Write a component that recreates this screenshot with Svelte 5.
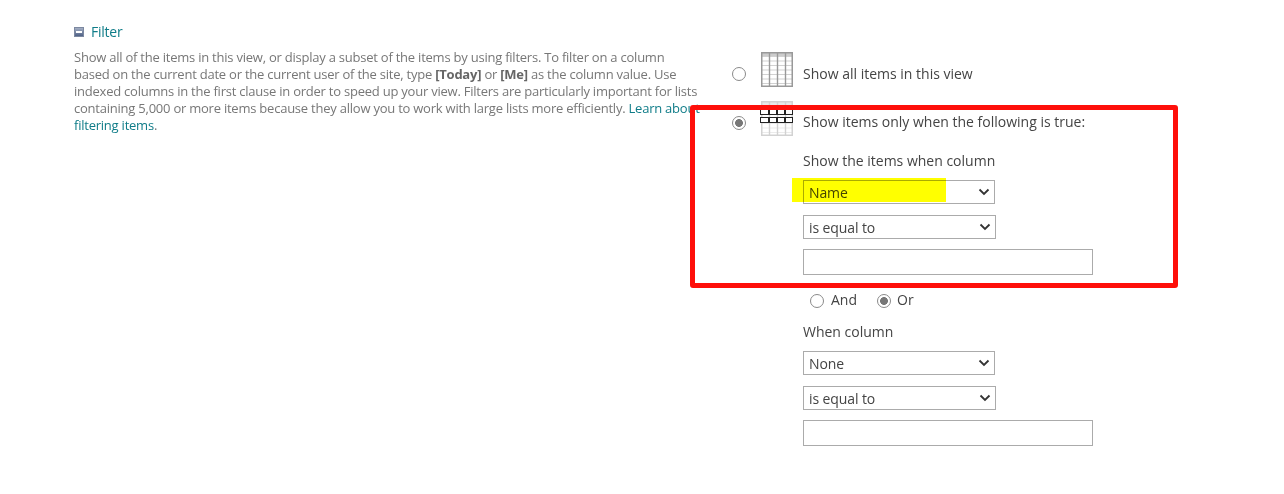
<script>
  const cols = [1, 2, 3];
  const rows = [0, 1, 2, 3, 4, 5, 6];
</script>

{#snippet grid(cls)}
  <svg class={cls} width="32" height="35" viewBox="0 0 32 35" aria-hidden="true">
    <rect x="0.75" y="0.75" width="30.5" height="33.5" fill="#fff" stroke="currentColor" stroke-width="1.5" />
    <rect x="1" y="1" width="30" height="3" fill="currentColor" opacity="0.5" />
    {#each rows as r}
      <line x1="1" x2="31" y1={4.5 + r * 4.5} y2={4.5 + r * 4.5} stroke="currentColor" stroke-opacity="0.45" />
    {/each}
    {#each cols as c}
      <line x1={0.5 + c * 8} x2={0.5 + c * 8} y1="1" y2="34" stroke="currentColor" stroke-width="1.4" />
    {/each}
  </svg>
{/snippet}

{#snippet select(label, cls = '')}
  <div class="select {cls}">
    <span>{label}</span>
    <svg width="12" height="8" viewBox="0 0 12 8" aria-hidden="true"><path d="M1.5 1.5 6 6l4.5-4.5" fill="none" stroke="#333" stroke-width="1.8" /></svg>
  </div>
{/snippet}

<div class="page">
  <section class="left">
    <h2><span class="toggle"><i></i></span>Filter</h2>
    <p>Show all of the items in this view, or display a subset of the items by using filters. To filter on a column based on the current date or the current user of the site, type <b>[Today]</b> or <b>[Me]</b> as the column value. Use indexed columns in the first clause in order to speed up your view. Filters are particularly important for lists containing 5,000 or more items because they allow you to work with large lists more efficiently. <a href="#top">Learn about filtering items</a>.</p>
  </section>

  <section class="right">
    <div class="option">
      <span class="radio"></span>
      {@render grid('grid dark')}
      <span class="label top">Show all items in this view</span>
    </div>
    <div class="option second">
      <span class="radio on"></span>
      <span class="gridwrap">
        {@render grid('grid light')}
        <i class="bar b1"></i><i class="bar b2"></i>
      </span>
      <span class="label">Show items only when the following is true:</span>
    </div>

    <div class="form">
      <div class="caption first">Show the items when column</div>
      {@render select('Name', 'gap1')}
      {@render select('is equal to', 'wide gap2')}
      <div class="input gap3"></div>
      <div class="andor">
        <span class="radio small"></span><span>And</span>
        <span class="radio small on orr"></span><span>Or</span>
      </div>
      <div class="caption when">When column</div>
      {@render select('None', 'gap1')}
      {@render select('is equal to', 'wide gap2')}
      <div class="input gap3"></div>
    </div>
  </section>

  <div class="redbox"></div>
  <div class="marker"></div>
</div>

<style>
  :global(body) { margin: 0; background: #fff; }
  .page {
    position: relative;
    width: 1284px;
    height: 494px;
    overflow: hidden;
    display: flex;
    font-family: "Open Sans", "Noto Sans", sans-serif;
    color: #444;
    background: #fff;
  }
  .left { width: 729px; box-sizing: border-box; padding: 23px 0 0 74px; flex: none; }
  h2 {
    margin: 0;
    display: flex;
    align-items: center;
    font-size: 14px;
    font-weight: 400;
    line-height: 18px;
    letter-spacing: -0.25px;
    color: #0f7c88;
  }
  .toggle {
    width: 8px; height: 8px;
    margin-right: 7px;
    background: linear-gradient(#a4afc4, #4f6186);
    border: 1px solid #7c88a0;
    box-sizing: content-box;
    display: flex; align-items: center; justify-content: center;
  }
  .toggle i { width: 6px; height: 2px; background: #fff; display: block; }
  p {
    margin: 8px 0 0;
    width: 626px;
    font-size: 13px;
    line-height: 17px;
    letter-spacing: -0.23px;
    color: #777;
  }
  p b { color: #666; }
  a { color: #0f7c88; text-decoration: none; }

  .right { flex: none; padding: 52px 0 0 3px; color: #444; font-size: 14px; }
  .option { display: flex; align-items: flex-start; height: 35px; }
  .second { margin-top: 14px; }
  .label { margin-top: 11px; line-height: 20px; }
  .label.top { margin-top: 12px; }
  .radio {
    display: inline-block;
    box-sizing: border-box;
    width: 14px; height: 14px;
    border-radius: 50%;
    border: 1px solid #8a8a8a;
    background: #fff;
    flex: none;
    margin: 15px 15px 0 0;
  }
  .radio.on { background: radial-gradient(circle, #777 0 3.6px, #fff 4.2px); }
  .grid { display: block; margin-right: 10px; flex: none; }
  .dark { color: #999; }
  .light { color: #d2d2d2; }
  .gridwrap { position: relative; display: block; width: 32px; height: 35px; margin-right: 10px; flex: none; }
  .bar {
    position: absolute; left: -1px; width: 33px; height: 6px;
    box-sizing: border-box;
    border: 1px solid #222;
    background: linear-gradient(90deg, #fff 0 7.5px, #222 7.5px 8.5px, #fff 8.5px 15.5px, #222 15.5px 16.5px, #fff 16.5px 23.5px, #222 23.5px 24.5px, #fff 24.5px);
  }
  .b1 { top: 8px; }
  .b2 { top: 16px; }

  .form { margin-left: 71px; }
  .caption { line-height: 20px; }
  .first { margin-top: 15px; }
  .select {
    box-sizing: border-box;
    width: 192px; height: 24px;
    border: 1px solid #ababab;
    padding: 0 4px 0 5px;
    display: flex; align-items: center; justify-content: space-between;
    background: #fff;
    letter-spacing: -0.1px;
  }
  .select.wide { width: 193px; }
  .input {
    box-sizing: border-box;
    width: 290px; height: 26px;
    border: 1px solid #ababab;
    background: #fff;
  }
  .gap1 { margin-top: 9px; }
  .gap2 { margin-top: 11px; }
  .gap3 { margin-top: 10px; }
  .andor { display: flex; align-items: center; margin: 14px 0 0 7px; height: 20px; }
  .andor .radio { margin: 3px 7px 0 0; }
  .andor .orr { margin-left: 20px; margin-right: 6px; }
  .when { margin-top: 13px; }

  .redbox {
    position: absolute;
    left: 690px; top: 105px;
    width: 488px; height: 183px;
    box-sizing: border-box;
    border: 5px solid #fe0f0a;
    border-radius: 3px;
  }
  .marker {
    position: absolute;
    left: 792px; top: 178px;
    width: 154px; height: 24px;
    background: #ffff00;
    mix-blend-mode: multiply;
  }
</style>
